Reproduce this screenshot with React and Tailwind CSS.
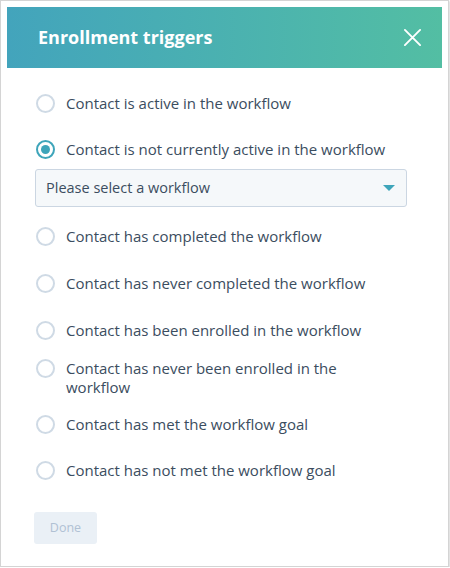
import { useState } from 'react';

const options = [
  { id: 'active', label: 'Contact is active in the workflow', gap: '' },
  { id: 'not-active', label: 'Contact is not currently active in the workflow', gap: 'mt-[27px]' },
  { id: 'completed', label: 'Contact has completed the workflow', gap: 'mt-[20px]' },
  { id: 'never-completed', label: 'Contact has never completed the workflow', gap: 'mt-[28px]' },
  { id: 'enrolled', label: 'Contact has been enrolled in the workflow', gap: 'mt-[28px]' },
  { id: 'never-enrolled', label: 'Contact has never been enrolled in the workflow', gap: 'mt-[19px]' },
  { id: 'goal', label: 'Contact has met the workflow goal', gap: 'mt-[18px]' },
  { id: 'no-goal', label: 'Contact has not met the workflow goal', gap: 'mt-[27px]' },
];

function Radio({ checked }) {
  return (
    <span
      className={
        checked
          ? 'w-[19px] h-[19px] shrink-0 rounded-full border-2 border-[#3ea5ba] flex items-center justify-center'
          : 'w-[19px] h-[19px] shrink-0 rounded-full border-2 border-[#cfdae5]'
      }
    >
      {checked && <span className="w-[9px] h-[9px] rounded-full bg-[#3ea5ba]"></span>}
    </span>
  );
}

export default function App() {
  const [selected, setSelected] = useState('not-active');

  return (
    <div className="w-[449px] h-[567px] bg-white border border-[#d4d4d4] shadow-[0_1px_2px_rgba(0,0,0,0.35)] p-[6px] font-['Open_Sans',sans-serif]">
      {/* Header */}
      <div className="h-[61px] bg-gradient-to-r from-[#43a4bc] to-[#53bea3] flex items-center justify-between pl-[31px] pr-[20px]">
        <h1 className="text-white text-[18px] font-bold">Enrollment triggers</h1>
        <svg width="19" height="19" viewBox="0 0 20 20" className="text-white">
          <path d="M2 2 L18 18 M18 2 L2 18" stroke="currentColor" strokeWidth="2" strokeLinecap="round" />
        </svg>
      </div>

      {/* Options */}
      <div className="pl-[29px] pt-[26px]">
        {options.map((opt) => (
          <div key={opt.id}>
            <label
              onClick={() => setSelected(opt.id)}
              className={'flex items-start gap-[11px] cursor-pointer ' + opt.gap}
            >
              <Radio checked={selected === opt.id} />
              <span className="max-w-[336px] text-[15px] leading-[19px] text-[#3b4d60]">{opt.label}</span>
            </label>
            {opt.id === 'not-active' && (
              <div className="mt-[10px] -ml-[1px] w-[372px] h-[38px] bg-[#f5f8fa] border border-[#cbd6e2] rounded-[3px] flex items-center justify-between pl-[10px] pr-[11px]">
                <span className="text-[14.5px] text-[#3b4d60]">Please select a workflow</span>
                <svg width="12" height="6" viewBox="0 0 12 6">
                  <path d="M0 0 H12 L6 6 Z" fill="#3ea5ba" />
                </svg>
              </div>
            )}
          </div>
        ))}
      </div>

      {/* Footer */}
      <div className="pl-[27px] mt-[32px]">
        <button disabled className="w-[63px] h-[32px] rounded-[3px] bg-[#eaf0f6] text-[#b0c1d4] text-[12.5px]">
          Done
        </button>
      </div>
    </div>
  );
}
